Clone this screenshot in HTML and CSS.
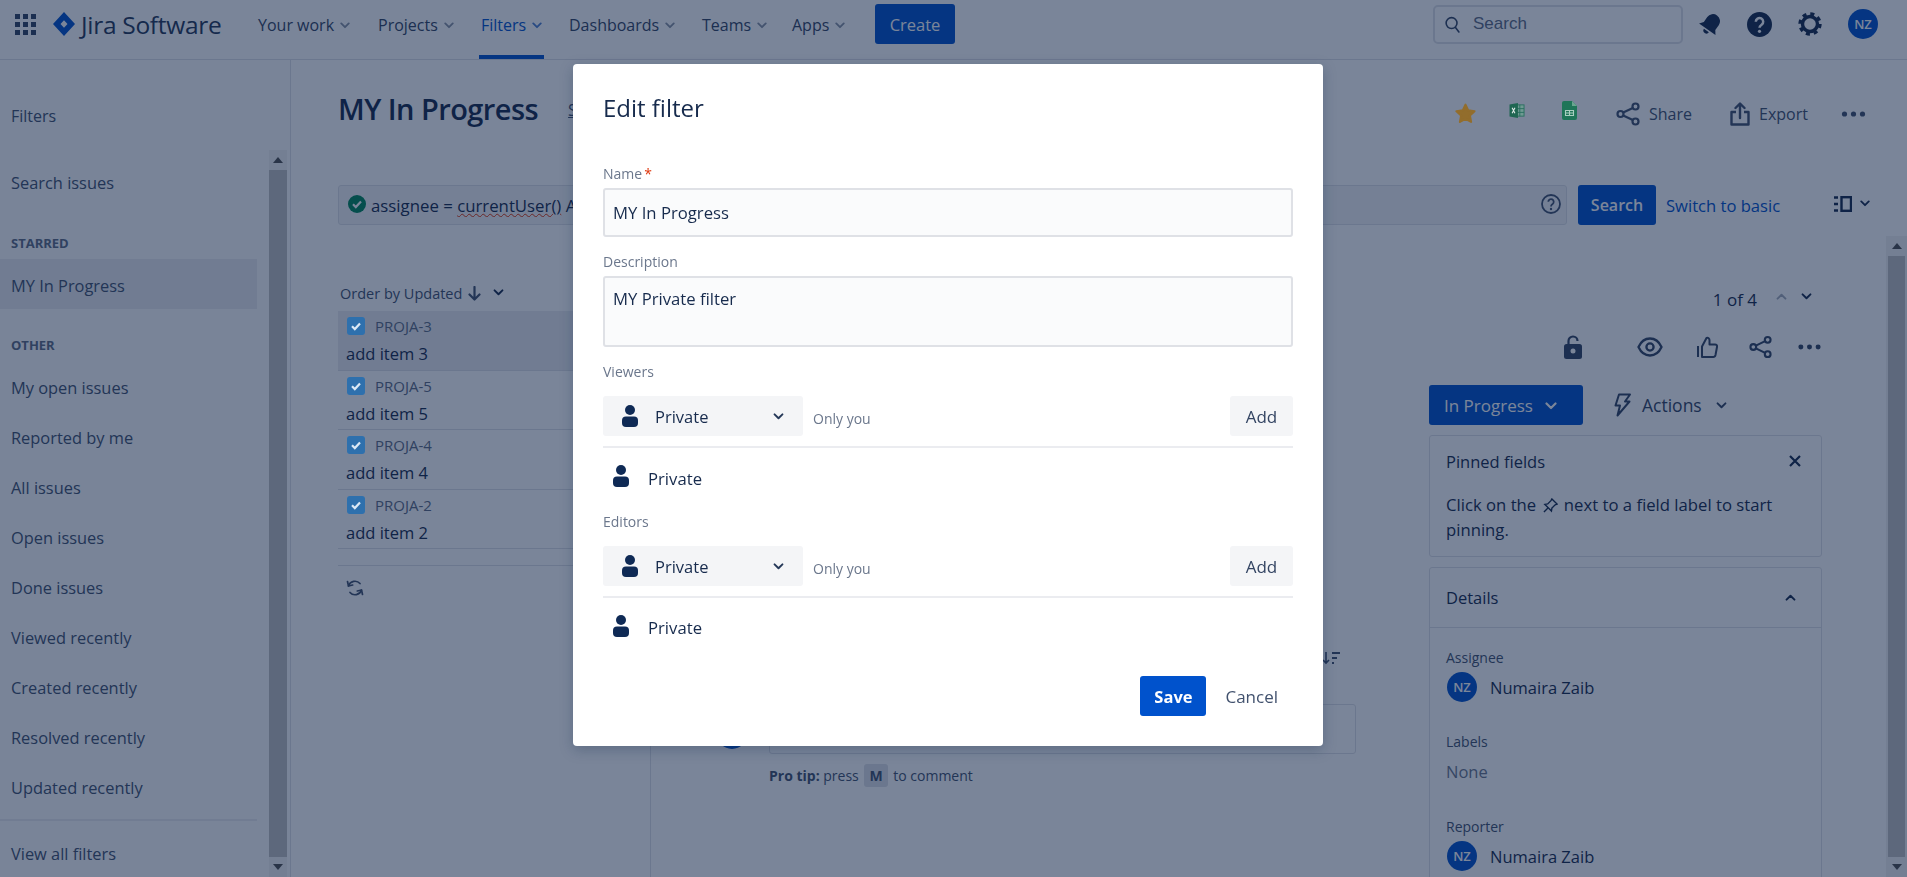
FILE: index.html
```html
<!DOCTYPE html>
<html lang="en">
<head>
<meta charset="utf-8">
<title>MY In Progress - Jira</title>
<link rel="stylesheet" href="styles.css">
</head>
<body>
<svg class="defs" width="0" height="0" aria-hidden="true">
  <symbol id="chev" viewBox="0 0 12 8"><path d="M1.5 1.5 6 6l4.5-4.5" fill="none" stroke="currentColor" stroke-width="2.2" stroke-linecap="round" stroke-linejoin="round"/></symbol>
  <symbol id="person" viewBox="0 0 16 22"><circle cx="8" cy="5" r="5" fill="currentColor"/><rect x="0" y="11.5" width="16" height="10.5" rx="4" fill="currentColor"/></symbol>
  <symbol id="share" viewBox="0 0 24 24"><g fill="none" stroke="currentColor" stroke-width="2.2"><circle cx="19.5" cy="4.5" r="3"/><circle cx="4.5" cy="12" r="3"/><circle cx="19.5" cy="19.5" r="3"/><path d="M7.2 10.6 16.8 5.9M7.2 13.4l9.6 4.7"/></g></symbol>
  <symbol id="dots" viewBox="0 0 24 6"><circle cx="3" cy="3" r="2.6" fill="currentColor"/><circle cx="12" cy="3" r="2.6" fill="currentColor"/><circle cx="21" cy="3" r="2.6" fill="currentColor"/></symbol>
</svg>

<div class="page">
  <header class="topbar">
    <div class="brand">
      <svg class="apps" viewBox="0 0 21 21"><g fill="#344563"><rect width="5" height="5"/><rect x="8" width="5" height="5"/><rect x="16" width="5" height="5"/><rect y="8" width="5" height="5"/><rect x="8" y="8" width="5" height="5"/><rect x="16" y="8" width="5" height="5"/><rect y="16" width="5" height="5"/><rect x="8" y="16" width="5" height="5"/><rect x="16" y="16" width="5" height="5"/></g></svg>
      <svg class="logo" viewBox="0 0 22 24"><path fill-rule="evenodd" d="M11 0 22 12 11 24 0 12zM11 8.200 7.500 12l3.500 3.800 3.500-3.800z" fill="#0052cc"/></svg>
      <span class="wordmark">Jira Software</span>
    </div>
    <nav class="nav">
      <a class="nav-item">Your work<svg class="nav-chev"><use href="#chev"/></svg></a>
      <a class="nav-item">Projects<svg class="nav-chev"><use href="#chev"/></svg></a>
      <a class="nav-item active">Filters<svg class="nav-chev"><use href="#chev"/></svg></a>
      <a class="nav-item">Dashboards<svg class="nav-chev"><use href="#chev"/></svg></a>
      <a class="nav-item">Teams<svg class="nav-chev"><use href="#chev"/></svg></a>
      <a class="nav-item">Apps<svg class="nav-chev"><use href="#chev"/></svg></a>
      <button class="btn-primary create">Create</button>
    </nav>
    <div class="top-right">
      <div class="top-search">
        <svg class="top-search-icon" viewBox="0 0 16 18"><circle cx="7" cy="7.500" r="5.800" fill="none" stroke="#344563" stroke-width="1.700"/><path d="m11 12 3.800 5" stroke="#344563" stroke-width="1.700" stroke-linecap="round"/></svg>
        <span>Search</span>
      </div>
      <svg class="bell" viewBox="0 0 24 24"><g transform="rotate(35 12 12)" fill="#172b4d"><path d="M12 1.500a7 7 0 0 0-7 7v6l-3 4h20l-3-4v-6a7 7 0 0 0-7-7z"/><path d="M9 20a3 3 0 0 0 6 0z"/></g></svg>
      <svg class="help" viewBox="0 0 25 25"><circle cx="12.500" cy="12.500" r="12.500" fill="#172b4d"/><path d="M8.800 9.800a3.700 3.700 0 1 1 5.800 3c-1.300.9-2.100 1.500-2.100 3" fill="none" stroke="#fff" stroke-width="2.500"/><circle cx="12.500" cy="19.300" r="1.600" fill="#fff"/></svg>
      <svg class="gear" viewBox="0 0 24 24"><g fill="none" stroke="#172b4d"><circle cx="12" cy="12" r="7.500" stroke-width="3.400"/><circle cx="12" cy="12" r="10" stroke-width="3.400" stroke-dasharray="4 3.850"/></g></svg>
      <span class="avatar">NZ</span>
    </div>
  </header>

  <div class="body">
    <aside class="sidebar">
      <h2 class="side-title">Filters</h2>
      <div class="side-scroll">
        <ul class="side-list">
          <li class="side-item">Search issues</li>
          <li class="side-head starred">STARRED</li>
          <li class="side-item selected">MY In Progress</li>
          <li class="side-head other">OTHER</li>
          <li class="side-item">My open issues</li>
          <li class="side-item">Reported by me</li>
          <li class="side-item">All issues</li>
          <li class="side-item">Open issues</li>
          <li class="side-item">Done issues</li>
          <li class="side-item">Viewed recently</li>
          <li class="side-item">Created recently</li>
          <li class="side-item">Resolved recently</li>
          <li class="side-item">Updated recently</li>
          <li class="side-item view-all">View all filters</li>
        </ul>
        <div class="scrollbar side-bar">
          <svg class="arrow" viewBox="0 0 10 6"><path d="M5 0 10 6H0z"/></svg>
          <div class="thumb"></div>
          <svg class="arrow" viewBox="0 0 10 6"><path d="M5 6 0 0h10z"/></svg>
        </div>
      </div>
    </aside>

    <main class="main">
      <div class="title-row">
        <h1 class="page-title">MY In Progress</h1>
        <a class="save-as">Save as</a>
        <div class="page-actions">
          <svg class="star" viewBox="0 0 20 20"><path d="m10 1.500 2.600 5.500 6 .8-4.400 4.200 1.100 6L10 15l-5.300 3 1.100-6-4.400-4.200 6-.8z" stroke-width="2" stroke-linejoin="round"/></svg>
          <svg class="excel" viewBox="0 0 16 16"><rect x="7" y="2" width="8.500" height="12" fill="#6f9a92" stroke="#2a7060"/><path d="M11 2v12M7 6h8.500M7 10h8.500" stroke="#2a7060"/><path d="M0 1.500 9 0v16L0 14.500z" fill="#1f6652"/><path d="m2.800 5 3 6M5.800 5l-3 6" stroke="#dfe8e6" stroke-width="1.200"/></svg>
          <svg class="sheet" viewBox="0 0 15 19"><path d="M2 0h8l5 5v12a2 2 0 0 1-2 2H2a2 2 0 0 1-2-2V2a2 2 0 0 1 2-2z" fill="#1f7558"/><path d="M10 0v5h5z" fill="#6aa590"/><path d="M3.500 9.500h8v5h-8zM7.500 9.500v5M3.500 12h8" fill="none" stroke="#a9cfc0" stroke-width="1.100"/></svg>
          <a class="action"><svg class="share-icon"><use href="#share"/></svg>Share</a>
          <a class="action"><svg class="export-icon" viewBox="0 0 20 24"><path d="M6 10H1.500v12.500h17V10H14" fill="none" stroke="#42526e" stroke-width="2.400" stroke-linejoin="round"/><path d="M10 16V2M5.500 6 10 1.500 14.500 6" fill="none" stroke="#42526e" stroke-width="2.400" stroke-linecap="round" stroke-linejoin="round"/></svg>Export</a>
          <svg class="dots-icon"><use href="#dots"/></svg>
        </div>
      </div>

      <div class="jql-row">
        <div class="jql-box">
          <svg class="ok" viewBox="0 0 18 18"><circle cx="9" cy="9" r="9" fill="#00875a"/><path d="m5 9.300 2.800 2.800L13 6.500" fill="none" stroke="#fff" stroke-width="2.200"/></svg>
          <span class="jql-text">assignee = <span class="squiggle">currentUser()</span> AND status = "In Progress" ORDER BY updated DESC</span>
          <svg class="jql-help" viewBox="0 0 20 20"><circle cx="10" cy="10" r="9" fill="none" stroke="#42526e" stroke-width="1.800"/><path d="M7.300 7.800a2.700 2.700 0 1 1 4.300 2.200c-1 .7-1.600 1.200-1.600 2.400" fill="none" stroke="#42526e" stroke-width="1.800"/><circle cx="10" cy="15" r="1.200" fill="#42526e"/></svg>
        </div>
        <button class="btn-primary search-btn">Search</button>
        <a class="switch">Switch to basic</a>
        <svg class="layout-icon" viewBox="0 0 18 16"><path d="M0 1.500h4M0 8h4M0 14.500h4" stroke="#172b4d" stroke-width="2.600"/><rect x="7.500" y="1.200" width="9.500" height="13.600" fill="none" stroke="#172b4d" stroke-width="2.400"/></svg>
        <svg class="layout-chev"><use href="#chev"/></svg>
      </div>

      <div class="content">
        <section class="issues">
          <div class="order">Order by Updated
            <svg class="order-arrow" viewBox="0 0 13 15"><path d="M6.500 1v12M1.500 8.500l5 5 5-5" fill="none" stroke="#42526e" stroke-width="2.200" stroke-linecap="round" stroke-linejoin="round"/></svg>
            <svg class="order-chev"><use href="#chev"/></svg>
          </div>
          <article class="issue current">
            <div class="issue-key"><span class="check"><svg viewBox="0 0 18 18"><path d="m5 9.300 2.800 2.800L13 6.500" fill="none" stroke="#dbe8f5" stroke-width="2.200"/></svg></span>PROJA-3</div>
            <div class="issue-name">add item 3</div>
          </article>
          <article class="issue">
            <div class="issue-key"><span class="check"><svg viewBox="0 0 18 18"><path d="m5 9.300 2.800 2.800L13 6.500" fill="none" stroke="#dbe8f5" stroke-width="2.200"/></svg></span>PROJA-5</div>
            <div class="issue-name">add item 5</div>
          </article>
          <article class="issue">
            <div class="issue-key"><span class="check"><svg viewBox="0 0 18 18"><path d="m5 9.300 2.800 2.800L13 6.500" fill="none" stroke="#dbe8f5" stroke-width="2.200"/></svg></span>PROJA-4</div>
            <div class="issue-name">add item 4</div>
          </article>
          <article class="issue">
            <div class="issue-key"><span class="check"><svg viewBox="0 0 18 18"><path d="m5 9.300 2.800 2.800L13 6.500" fill="none" stroke="#dbe8f5" stroke-width="2.200"/></svg></span>PROJA-2</div>
            <div class="issue-name">add item 2</div>
          </article>
          <div class="issue-foot">
            <svg class="refresh" viewBox="0 0 18 18"><g fill="none" stroke="#42526e" stroke-width="1.700" stroke-linecap="round" stroke-linejoin="round"><path d="M2.500 7A6.800 6.800 0 0 1 14 4.500"/><path d="M1.500 2.500 2.500 7l4.200-1"/><path d="M15.500 11A6.800 6.800 0 0 1 4 13.500"/><path d="M16.500 15.500l-1-4.500-4.200 1"/></g></svg>
          </div>
        </section>

        <section class="detail">
          <div class="issue-body">
            <div class="sort-row"><svg class="sort-icon" viewBox="0 0 18 14"><path d="M4 1v11M1 9l3 3 3-3" fill="none" stroke="#42526e" stroke-width="1.600"/><path d="M10 2h8M10 7h5M10 12h2" stroke="#42526e" stroke-width="1.800"/></svg></div>
            <div class="comment-row">
              <span class="avatar comment-avatar">NZ</span>
              <div class="comment-box"></div>
            </div>
            <p class="protip"><b>Pro tip:</b> press <kbd>M</kbd> to comment</p>
          </div>
          <aside class="side">
            <div class="pager">1 of 4<svg class="pager-up"><use href="#chev"/></svg><svg class="pager-down"><use href="#chev"/></svg></div>
            <div class="issue-tools">
              <svg class="lock" viewBox="0 0 18 24"><path d="M4.500 10V6a4.500 4.500 0 0 1 9 0" fill="none" stroke="#344563" stroke-width="2.200"/><rect y="9" width="18" height="15" rx="2.500" fill="#344563"/><circle cx="9" cy="16" r="2.500" fill="#fff"/></svg>
              <svg class="eye" viewBox="0 0 26 20"><path d="M1.500 10C4 4.500 8 1.500 13 1.500S22 4.500 24.500 10C22 15.500 18 18.500 13 18.500S4 15.500 1.500 10z" fill="none" stroke="#344563" stroke-width="2.300"/><circle cx="13" cy="10" r="3.600" fill="none" stroke="#344563" stroke-width="2.300"/></svg>
              <svg class="like" viewBox="0 0 21 22"><path d="M1 10v11" stroke="#344563" stroke-width="2"/><path d="M5 10.500 9.500 2c1.700-.5 3 .5 3 2.300V8.500H18c1.500 0 2.300 1 2 2.500l-1.500 8c-.3 1.300-1 2-2.300 2H5z" fill="none" stroke="#344563" stroke-width="2" stroke-linejoin="round"/></svg>
              <svg class="tool-share"><use href="#share"/></svg>
              <svg class="tool-dots"><use href="#dots"/></svg>
            </div>
            <div class="workflow">
              <button class="btn-primary status">In Progress<svg class="status-chev"><use href="#chev"/></svg></button>
              <a class="actions-btn">
                <svg class="bolt" viewBox="0 0 18 24"><path d="M6 1.500h11L12 8.500h4.500L4.500 22.500 7 12.500H2.500z" fill="none" stroke="#344563" stroke-width="2" stroke-linejoin="round"/></svg>
                Actions<svg class="actions-chev"><use href="#chev"/></svg>
              </a>
            </div>
            <div class="panel pinned">
              <div class="panel-head"><h3>Pinned fields</h3><svg class="close" viewBox="0 0 12 12"><path d="m1 1 10 10M11 1 1 11" stroke="#172b4d" stroke-width="2.200"/></svg></div>
              <p class="pinned-text">Click on the <svg class="pin" viewBox="0 0 16 16"><path d="M9.500 1 15 6.500l-2 .8-3.500 3.500-.5 3-7-7 3-.5 3.500-3.500zM5 11l-4 4" fill="none" stroke="#172b4d" stroke-width="1.500"/></svg> next to a field label to start pinning.</p>
            </div>
            <div class="panel details">
              <div class="panel-head details-head"><h3>Details</h3><svg class="details-chev"><use href="#chev"/></svg></div>
              <div class="field-label first">Assignee</div>
              <div class="field-user"><span class="avatar">NZ</span>Numaira Zaib</div>
              <div class="field-label">Labels</div>
              <div class="field-none">None</div>
              <div class="field-label">Reporter</div>
              <div class="field-user"><span class="avatar">NZ</span>Numaira Zaib</div>
            </div>
          </aside>
          <div class="scrollbar main-bar">
            <svg class="arrow" viewBox="0 0 10 6"><path d="M5 0 10 6H0z"/></svg>
            <div class="thumb"></div>
            <svg class="arrow" viewBox="0 0 10 6"><path d="M5 6 0 0h10z"/></svg>
          </div>
        </section>
      </div>
    </main>
  </div>
</div>

<div class="overlay"></div>

<div class="modal" role="dialog" aria-label="Edit filter">
  <h2 class="modal-title">Edit filter</h2>
  <label class="label name-label">Name<span class="req">*</span></label>
  <div class="input">MY In Progress</div>
  <label class="label">Description</label>
  <div class="input area">MY Private filter</div>

  <label class="label">Viewers</label>
  <div class="share-row">
    <div class="select"><svg class="person"><use href="#person"/></svg><span>Private</span><svg class="select-chev"><use href="#chev"/></svg></div>
    <span class="only">Only you</span>
    <button class="add">Add</button>
  </div>
  <div class="share-item"><svg class="person"><use href="#person"/></svg><span>Private</span></div>

  <label class="label">Editors</label>
  <div class="share-row">
    <div class="select"><svg class="person"><use href="#person"/></svg><span>Private</span><svg class="select-chev"><use href="#chev"/></svg></div>
    <span class="only">Only you</span>
    <button class="add">Add</button>
  </div>
  <div class="share-item second"><svg class="person"><use href="#person"/></svg><span>Private</span></div>

  <div class="modal-foot">
    <button class="save">Save</button>
    <button class="cancel">Cancel</button>
  </div>
</div>
</body>
</html>
```

FILE: styles.css
```css
* { box-sizing: border-box; }
html, body { margin: 0; height: 100%; overflow: hidden; }
body { font-family: "Open Sans", "Liberation Sans", sans-serif; font-size: 16px; color: #172b4d; background: #fff; }
.defs { position: absolute; }
h1, h2, h3, p, ul { margin: 0; padding: 0; }
ul { list-style: none; }
button { font-family: inherit; border: 0; cursor: pointer; }
svg { display: block; flex: none; }

.page { height: 877px; display: flex; flex-direction: column; overflow: hidden; }

/* top bar */
.topbar { height: 60px; flex: none; display: flex; align-items: stretch; border-bottom: 1px solid #dfe1e6; }
.brand { width: 258px; flex: none; padding: 0 0 11px 15px; display: flex; align-items: center; }
.apps { width: 21px; height: 21px; margin-right: 17px; }
.logo { width: 22px; height: 24px; margin-right: 6px; }
.wordmark { font-size: 24.500px; font-weight: 500; color: #253858; letter-spacing: -0.3px; white-space: nowrap; }
.nav { display: grid; grid-template-columns: 120px 103px 88px 133px 90px 83px 80px; align-items: stretch; }
.nav-item { justify-self: start; display: flex; align-items: center; gap: 6px; margin-left: -2px; padding: 0 2px 6px; font-size: 16px; color: #344563; white-space: nowrap; border-bottom: 4px solid transparent; height: 59px; }
.nav-item.active { color: #0052cc; border-bottom-color: #0052cc; }
.nav-chev { width: 10px; height: 7px; color: #8993a4; margin-top: 2px; }
.active .nav-chev { color: #4c7fd0; }
.btn-primary { background: #0052cc; color: #fff; border-radius: 3px; font-size: 16px; font-weight: 600; }
.create { width: 80px; height: 40px; align-self: start; margin-top: 4px; font-weight: 500; font-size: 16.500px; }
.top-right { margin-left: auto; display: flex; align-items: center; gap: 26px; padding-right: 29px; height: 48px; }
.top-search { width: 250px; height: 39px; margin-right: -10px; border: 2px solid #dfe1e6; border-radius: 5px; display: flex; align-items: center; padding-left: 10px; gap: 13px; font-family: "Liberation Sans", sans-serif; font-size: 17px; color: #5e6c84; }
.top-search-icon { width: 15px; height: 17px; }
.bell { width: 24px; height: 24px; margin-right: -2px; }
.help { width: 25px; height: 25px; }
.gear { width: 24px; height: 24px; }
.avatar { width: 30px; height: 30px; flex: none; border-radius: 50%; background: #0052cc; color: #fff; font-size: 13px; font-weight: 600; display: flex; align-items: center; justify-content: center; }

/* body */
.body { flex: 1; display: flex; min-height: 0; }
.sidebar { width: 291px; flex: none; border-right: 1px solid #dfe1e6; background: #fcfcfd; display: flex; flex-direction: column; overflow: hidden; }
.side-title { height: 90px; flex: none; padding: 44px 0 0 11px; font-size: 16px; line-height: 24px; font-weight: 500; color: #42526e; }
.side-scroll { flex: 1; display: flex; min-height: 0; }
.side-list { width: 269px; flex: none; padding-top: 8px; }
.side-item { height: 50px; line-height: 50px; padding-left: 11px; margin-right: 12px; font-size: 16.400px; color: #42526e; white-space: nowrap; }
.side-item.selected { background: #ebecf0; line-height: 54px; }
.side-head { padding-left: 11px; font-size: 13px; font-weight: 700; line-height: 22px; color: #5e6c84; }
.starred { padding-top: 24px; padding-bottom: 5px; }
.other { padding-top: 25px; padding-bottom: 7px; }
.view-all { margin-top: 6px; padding-top: 8px; border-top: 2px solid #ebecf0; height: 60px; }

.scrollbar { background: #f1f1f1; display: flex; flex-direction: column; align-items: center; }
.side-bar { width: 18px; height: 727px; margin-right: 3px; }
.arrow { width: 10px; height: 6px; margin: 7px 0; fill: #505050; }
.thumb { flex: 1; width: 100%; background: #c1c1c1; }

/* main */
.main { flex: 1; min-width: 0; padding-left: 47px; display: flex; flex-direction: column; }
.title-row { height: 40px; margin-top: 30px; flex: none; display: flex; align-items: center; padding-right: 41px; }
.page-title { font-size: 29px; font-weight: 600; line-height: 40px; margin-top: -2px; color: #172b4d; letter-spacing: -0.55px; white-space: nowrap; }
.save-as { margin-left: 30px; font-size: 16px; color: #42526e; text-decoration: underline; }
.page-actions { margin-left: auto; display: grid; grid-template-columns: 54px 53px 54px 114px 111px 25px; align-items: center; position: relative; }
.star { width: 21px; height: 21px; margin-top: 6px; position: relative; z-index: 20; fill: #926d2c; stroke: #926d2c; }
.excel { width: 16px; height: 15px; margin-top: 1px; position: relative; z-index: 20; }
.sheet { width: 15px; height: 19px; margin-top: 0; position: relative; z-index: 20; }
.action { display: flex; align-items: center; gap: 9px; color: #42526e; font-size: 16px; margin-top: 7px; }
.share-icon { width: 24px; height: 24px; color: #42526e; }
.export-icon { width: 20px; height: 24px; }
.dots-icon { width: 25px; height: 6px; color: #42526e; margin-top: 7px; }

.jql-row { height: 40px; margin-top: 55px; flex: none; display: flex; align-items: center; }
.jql-box { width: 1229px; height: 40px; flex: none; display: flex; align-items: center; gap: 5px; padding: 0 0 0 9px; background: #f4f5f7; border: 1px solid #dfe1e6; border-radius: 3px; overflow: hidden; }
.ok { width: 18px; height: 18px; margin-top: -2px; }
.jql-text { font-size: 16.800px; color: #172b4d; white-space: nowrap; flex: 1; margin-top: 1px; overflow: hidden; }
.squiggle { text-decoration: underline wavy #de350b 1px; }
.jql-help { width: 20px; height: 20px; margin-right: 5px; margin-top: -3px; }
.search-btn { width: 78px; height: 40px; margin-left: 11px; flex: none; }
.switch { margin-left: 10px; width: 168px; flex: none; color: #0052cc; font-size: 16.600px; white-space: nowrap; }
.layout-icon { width: 18px; height: 16px; margin-top: -2px; }
.layout-chev { width: 10px; height: 7px; margin-left: 8px; margin-top: -4px; color: #172b4d; }

.content { flex: 1; min-height: 0; display: flex; }
.issues { width: 312px; flex: none; }
.order { height: 33px; margin-top: 52px; margin-bottom: 1px; display: flex; align-items: center; font-size: 14.500px; color: #42526e; padding-left: 2px; white-space: nowrap; }
.order-arrow { width: 13px; height: 15px; margin-left: 6px; }
.order-chev { width: 11px; height: 7px; margin-left: 12px; margin-top: -2px; color: #172b4d; }
.issue { height: 59.500px; padding: 5px 0 0 8px; border-bottom: 1px solid #dfe1e6; }
.issue.current { background: #ebecf0; }
.issue-key { display: flex; align-items: center; font-size: 15px; color: #5e6c84; height: 20px; line-height: 20px; }
.check { width: 18px; height: 18px; background: #2e70ad; border-radius: 3px; margin: 0 10px 0 1px; flex: none; position: relative; z-index: 20; }
.issue-name { font-size: 16.500px; color: #172b4d; margin-top: 5px; line-height: 26px; }
.issue-foot { margin-top: 16px; border-top: 1px solid #dfe1e6; padding: 13px 0 0 8px; }
.refresh { width: 18px; height: 18px; }

.detail { flex: 1; min-width: 0; display: flex; border-left: 1px solid #dfe1e6; }
.issue-body { width: 778px; flex: none; padding-top: 421px; }
.sort-row { height: 24px; display: flex; justify-content: flex-end; padding-right: 89px; align-items: center; }
.sort-icon { width: 18px; height: 14px; }
.comment-row { display: flex; margin-top: 34px; padding-left: 66px; gap: 22px; align-items: flex-start; }
.comment-avatar { margin-top: 15px; }
.comment-box { width: 587px; height: 50px; border: 1px solid #dfe1e6; border-radius: 3px; flex: none; }
.protip { margin: 11px 0 0 118px; font-size: 14px; color: #42526e; line-height: 22px; }
.protip kbd { font-family: inherit; font-weight: 700; background: #dfe1e6; border-radius: 3px; padding: 2px 5px; margin: 0 2px; }

.side { width: 393px; flex: none; padding-top: 60px; }
.pager { height: 30px; display: flex; align-items: center; justify-content: flex-end; padding-right: 10px; padding-bottom: 1px; font-size: 17px; white-space: nowrap; color: #172b4d; }
.pager-up { width: 11px; height: 7px; margin-left: 19px; color: #a5adba; transform: scaleY(-1); margin-top: -6px; }
.pager-down { width: 11px; height: 7px; margin-left: 14px; color: #172b4d; margin-top: -6px; }
.issue-tools { height: 24px; margin-top: 20px; padding-left: 135px; display: grid; grid-template-columns: 73px 60px 52px 49px 24px; align-items: center; }
.lock { width: 18px; height: 24px; }
.eye { width: 26px; height: 20px; }
.like { width: 21px; height: 22px; }
.tool-share { width: 23px; height: 24px; color: #344563; }
.tool-dots { width: 23px; height: 6px; color: #344563; }
.workflow { margin-top: 26px; display: flex; align-items: center; height: 40px; }
.status { width: 154px; height: 40px; display: flex; align-items: center; padding-left: 15px; font-size: 17px; font-weight: 500; white-space: nowrap; }
.status-chev { width: 12px; height: 8px; margin-left: 12px; margin-top: 1px; }
.actions-btn { margin-left: 30px; display: flex; align-items: center; color: #344563; font-weight: 500; font-size: 17.500px; }
.bolt { width: 18px; height: 24px; margin-right: 11px; }
.actions-chev { width: 11px; height: 7px; margin-left: 14px; }
.panel { border: 1px solid #dfe1e6; border-radius: 3px; margin-top: 10px; }
.pinned { height: 122px; padding: 0 16px; }
.panel-head { height: 50px; display: flex; align-items: center; justify-content: space-between; }
.panel-head h3 { font-size: 16.500px; font-weight: 500; color: #172b4d; }
.close { width: 12px; height: 12px; margin-right: 4px; }
.pinned-text { font-size: 16.700px; line-height: 25px; margin-top: 6px; color: #172b4d; }
.pin { display: inline-block; width: 15px; height: 15px; vertical-align: -2px; margin: 0 2px; }
.details { height: 320px; padding: 0 16px; }
.details-head { height: 60px; border-bottom: 1px solid #dfe1e6; margin: 0 -16px; padding: 0 25px 0 16px; }
.details-chev { width: 11px; height: 7px; transform: scaleY(-1); }
.field-label { font-size: 14px; font-weight: 500; color: #42526e; line-height: 20px; margin-top: 30px; }
.field-label.first { margin-top: 20px; }
.field-user { display: flex; align-items: center; gap: 13px; height: 30px; margin-top: 4px; font-size: 16.500px; padding-left: 1px; }
.field-none { font-size: 16.500px; color: #6b778c; line-height: 30px; margin-top: 5px; }
.main-bar { width: 21px; height: 641px; margin-left: 64px; margin-top: 11px; padding: 0 2px; }

/* modal */
.overlay { position: fixed; inset: 0; background: rgba(9, 30, 66, 0.54); z-index: 10; }
.modal { position: fixed; left: 573px; top: 64px; width: 750px; height: 682px; background: #fff; border-radius: 4px; box-shadow: 0 4px 14px rgba(9, 30, 66, 0.25); padding: 28px 30px 30px; z-index: 30; display: flex; flex-direction: column; }
.modal-title { font-size: 24px; line-height: 32px; font-weight: 500; color: #172b4d; margin-bottom: 25px; }
.label { display: block; font-size: 14px; line-height: 20px; font-weight: 500; color: #6b778c; margin-top: 15px; }
.req { color: #de350b; margin-left: 2px; }
.input { margin-top: 4px; height: 49px; background: #fafbfc; border: 2px solid #dfe1e6; border-radius: 3px; padding: 0 8px; display: flex; align-items: center; font-size: 16.700px; color: #172b4d; }
.area { height: 71px; margin-top: 4px; align-items: flex-start; padding-top: 9px; }
.share-row { margin-top: 14px; padding-bottom: 10px; border-bottom: 2px solid #ebecf0; display: flex; align-items: flex-start; }
.select { width: 200px; height: 40px; background: #f4f5f7; border-radius: 3px; display: flex; align-items: center; padding-left: 19px; font-size: 16.500px; color: #172b4d; }
.select span { margin-left: 17px; }
.person { width: 16px; height: 22px; color: #0f2a55; }
.select-chev { width: 11px; height: 7px; margin-left: auto; margin-right: 19px; color: #253858; }
.only { margin-left: 10px; margin-top: 13px; font-size: 14px; line-height: 20px; color: #6b778c; }
.add { margin-left: auto; width: 63px; height: 40px; background: #f4f5f7; border-radius: 3px; font-size: 17px; font-weight: 500; color: #344563; }
.share-item { height: 64px; padding: 17px 0 0 10px; display: flex; align-items: flex-start; font-size: 16.700px; color: #172b4d; }
.share-item span { margin-left: 19px; margin-top: 2px; }
.share-item.second span { margin-top: 1px; }
.share-item + .label { margin-top: 0; }
.modal-foot { margin-top: auto; display: flex; align-items: center; }
.save { margin-left: auto; width: 66px; height: 40px; background: #0052cc; color: #fff; border-radius: 3px; font-size: 16.500px; font-weight: 700; }
.cancel { margin-left: 19px; margin-right: 15px; background: none; padding: 0; font-size: 17px; color: #42526e; }
```
